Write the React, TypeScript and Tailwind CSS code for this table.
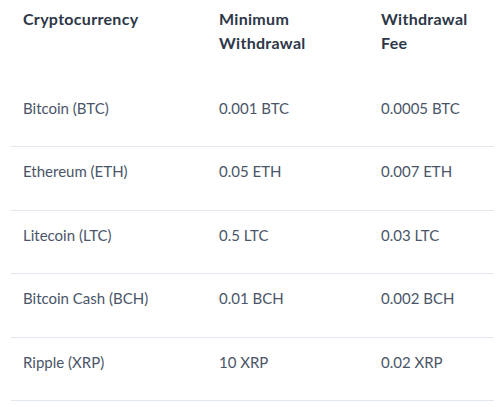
const rows = [
  ["Bitcoin (BTC)", "0.001 BTC", "0.0005 BTC"],
  ["Ethereum (ETH)", "0.05 ETH", "0.007 ETH"],
  ["Litecoin (LTC)", "0.5 LTC", "0.03 LTC"],
  ["Bitcoin Cash (BCH)", "0.01 BCH", "0.002 BCH"],
  ["Ripple (XRP)", "10 XRP", "0.02 XRP"],
]

export default function App() {
  return (
    <div className="min-h-[407px] bg-white pl-[11px] font-['Lato','Open_Sans',sans-serif] text-[15px] leading-6">
      <table className="w-[483px] border-collapse text-left">
        <thead>
          <tr className="align-top text-[16px] font-bold tracking-[0.3px] text-[#2d3748]">
            <th className="w-[196px] px-3 pt-[7px] pb-[28.5px]">Cryptocurrency</th>
            <th className="w-[162px] px-3 pt-[7px] pb-[28.5px]">
              Minimum
              <br />
              Withdrawal
            </th>
            <th className="px-3 pt-[7px] pb-[28.5px]">
              Withdrawal
              <br />
              Fee
            </th>
          </tr>
        </thead>
        <tbody>
          {rows.map((r) => (
            <tr key={r[0]} className="border-b border-[#e2e8f0] align-top text-[#4a5568]">
              {r.map((c, i) => (
                <td key={i} className="px-3 pt-3 pb-[26.5px]">
                  {c}
                </td>
              ))}
            </tr>
          ))}
        </tbody>
      </table>
    </div>
  )
}
